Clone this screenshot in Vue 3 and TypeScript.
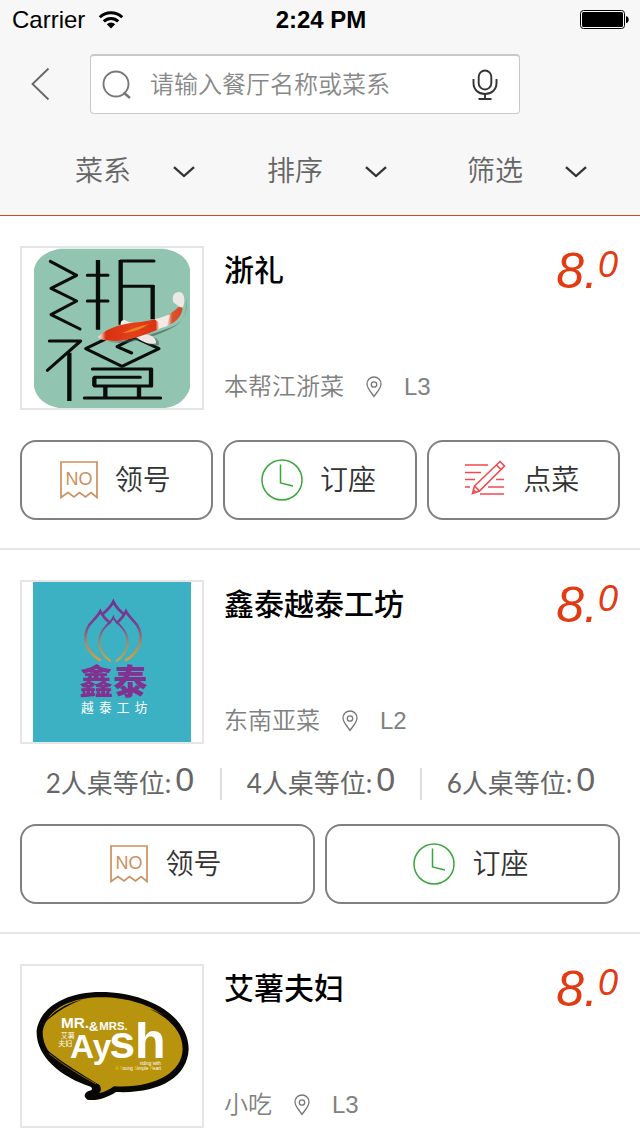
<script setup lang="ts">
import { ref } from 'vue'

type Action = 'number' | 'book' | 'order'

interface Restaurant {
  id: string
  name: string
  cuisine: string
  floor: string
  score: [string, string]
  queue: { size: number; waiting: number }[]
  actions: Action[]
}

const keyword = ref('')
const filters = ['菜系', '排序', '筛选']
const actionLabels: Record<Action, string> = { number: '领号', book: '订座', order: '点菜' }

const restaurants: Restaurant[] = [
  {
    id: 'zheli',
    name: '浙礼',
    cuisine: '本帮江浙菜',
    floor: 'L3',
    score: ['8.', '0'],
    queue: [],
    actions: ['number', 'book', 'order'],
  },
  {
    id: 'xintai',
    name: '鑫泰越泰工坊',
    cuisine: '东南亚菜',
    floor: 'L2',
    score: ['8.', '0'],
    queue: [
      { size: 2, waiting: 0 },
      { size: 4, waiting: 0 },
      { size: 6, waiting: 0 },
    ],
    actions: ['number', 'book'],
  },
  {
    id: 'aysh',
    name: '艾薯夫妇',
    cuisine: '小吃',
    floor: 'L3',
    score: ['8.', '0'],
    queue: [],
    actions: [],
  },
]
</script>

<template>
  <div class="page">
    <header class="header">
      <div class="status">
        <div class="carrier">
          <span>Carrier</span>
          <svg width="26" height="20" viewBox="0 0 26 20" aria-hidden="true">
            <g fill="none" stroke="#000" stroke-width="3">
              <path d="M1.8 7.2a16 16 0 0 1 22.4 0" />
              <path d="M5.8 11.4a10.2 10.2 0 0 1 14.4 0" />
            </g>
            <path d="M13 18.4l-4.2-4.2a6 6 0 0 1 8.4 0z" />
          </svg>
        </div>
        <div class="time">2:24 PM</div>
        <svg class="battery" width="50" height="20" viewBox="0 0 50 20" aria-hidden="true">
          <rect x="0.5" y="0.5" width="44" height="18" rx="3" fill="#fff" stroke="#000" />
          <rect x="2" y="2" width="41" height="15" rx="1.5" />
          <path d="M46 6.2c3.6 0 3.6 6.8 0 6.8z" />
        </svg>
      </div>

      <div class="nav">
        <button class="back" type="button" aria-label="返回">
          <svg width="20" height="34" viewBox="0 0 20 34" aria-hidden="true">
            <path d="M18.500 1.500L2.500 17l16 15.500" fill="none" stroke="#666" stroke-width="1.8" />
          </svg>
        </button>
        <div class="search">
          <svg width="30" height="30" viewBox="0 0 30 30" aria-hidden="true">
            <g fill="none" stroke="#777" stroke-width="1.9">
              <circle cx="14" cy="14" r="12.500" />
              <path d="M21.500 22.500l6.500 5.500" stroke-width="2.400" />
            </g>
          </svg>
          <input v-model="keyword" type="text" aria-label="搜索餐厅" placeholder="请输入餐厅名称或菜系" />
          <button class="mic" type="button" aria-label="语音搜索">
            <svg width="26" height="32" viewBox="0 0 26 32" aria-hidden="true">
              <g fill="none" stroke="#333" stroke-width="1.9">
                <rect x="6.700" y="1.500" width="12.600" height="19" rx="6.300" />
                <path d="M1.500 10v4c0 6.500 5 11 11.500 11s11.500-4.500 11.500-11v-4" />
                <path d="M13 25v5M6.500 30h13" />
              </g>
            </svg>
          </button>
        </div>
      </div>

      <div class="filters">
        <button v-for="label in filters" :key="label" class="filter" type="button">
          <span>{{ label }}</span>
          <svg width="22" height="12" viewBox="0 0 22 12" aria-hidden="true">
            <path d="M1 1.200L11 10l10-8.800" fill="none" stroke="#333" stroke-width="2.300" />
          </svg>
        </button>
      </div>
    </header>

    <main>
      <article v-for="r in restaurants" :key="r.id" class="card">
        <div class="summary">
          <div class="logo">
            <svg v-if="r.id === 'zheli'" viewBox="36 36 540 480" role="img" aria-label="浙礼">
              <defs>
                <linearGradient id="koi" gradientUnits="userSpaceOnUse" x1="264" y1="0" x2="526" y2="0">
                  <stop offset="0" stop-color="#f1e4de" />
                  <stop offset="0.040" stop-color="#e8b7a6" />
                  <stop offset="0.090" stop-color="#da2f12" />
                  <stop offset="0.400" stop-color="#e2401a" />
                  <stop offset="0.660" stop-color="#db3313" />
                  <stop offset="0.700" stop-color="#f6e9e2" />
                  <stop offset="0.790" stop-color="#f3e3dc" />
                  <stop offset="0.850" stop-color="#d9532f" />
                  <stop offset="1" stop-color="#d9411c" />
                </linearGradient>
              </defs>
              <path
                d="M150 38H462C510 46 534 70 540 100V455C532 485 506 510 466 516H146C104 508 78 484 72 452V100C78 70 104 46 150 38z"
                fill="#91c5b2"
              />
              <g fill="none" stroke="#0b0d0c" stroke-width="9" stroke-linecap="round" stroke-linejoin="round">
                <path d="M121 76L200 118L123 157L200 195L123 236L210 279" />
                <path d="M232 118H294M232 195H294M332 75H432M332 151H430M118 315H212L112 403" />
                <path d="M247 399H425M253 424H391M253 450H425M223 486H452" />
                <path d="M283 311L227 338L336 391L447 338L375 305L321 332L365 351" />
              </g>
              <g fill="none" stroke="#0b0d0c" stroke-width="13">
                <path d="M264 72V281M332 72V266M428 148V250M178 350V495" />
                <path d="M253 424V450M423 399V450M286 450V486M387 450V486" />
              </g>
              <path
                d="M292 316C350 322 440 290 478 276C522 262 538 220 528 184C536 230 516 266 474 282C404 314 336 328 292 316z"
                fill="#38594d"
                opacity="0.600"
              />
              <path d="M384 306C418 292 454 306 446 328C422 332 400 320 384 306z" fill="#38594d" opacity="0.500" />
              <path d="M372 300C410 286 440 300 438 322C416 328 396 316 372 300z" fill="#eee7e2" />
              <path d="M332 270Q330 250 344 252Q360 262 384 262z" fill="#f3eee9" />
              <path
                d="M264 302C300 270 346 262 392 258C440 252 482 240 508 211L518 213C516 248 490 260 471 271L452 277C400 300 340 322 292 313C276 313 264 306 264 302z"
                fill="url(#koi)"
              />
              <path d="M434 250C452 245 466 242 480 236L472 268L448 276Q454 264 434 250z" fill="#f4e9e3" />
              <path d="M336 292C360 280 388 270 416 264Q390 286 336 292z" fill="#f0a12b" opacity="0.700" />
              <path d="M509 213L490 199C482 172 504 162 517 172C526 186 524 202 518 215z" fill="#ece9e5" />
            </svg>

            <svg v-else-if="r.id === 'xintai'" viewBox="36 36 540 480" role="img" aria-label="鑫泰 越泰工坊">
              <defs>
                <linearGradient id="lotus" gradientUnits="userSpaceOnUse" x1="0" y1="90" x2="0" y2="275">
                  <stop offset="0" stop-color="#762c91" />
                  <stop offset="0.400" stop-color="#7b3f91" />
                  <stop offset="0.700" stop-color="#a58b68" />
                  <stop offset="1" stop-color="#d4a43e" />
                </linearGradient>
              </defs>
              <rect x="69" y="36" width="474" height="480" fill="#3cb1c4" />
              <g fill="none" stroke="url(#lotus)" stroke-width="8">
                <path d="M276 134C288 124 302 112 310 95C318 112 330 124 344 134" />
                <path d="M272 272C212 236 218 182 249 152C260 140 268 130 271 124C277 136 286 148 302 160" />
                <path d="M346 272C406 236 400 182 370 152C359 140 351 130 348 124C342 136 334 148 318 160" />
                <path d="M302 274C254 240 262 194 290 166C300 156 307 150 310 142C313 150 320 156 330 166C360 196 366 240 318 274" stroke-width="6" />
              </g>
              <text x="310" y="372" class="xintai-name">鑫泰</text>
              <text x="213" y="426" class="xintai-sub">越</text>
              <text x="267" y="426" class="xintai-sub">泰</text>
              <text x="320" y="426" class="xintai-sub">工</text>
              <text x="374" y="426" class="xintai-sub">坊</text>
            </svg>

            <svg v-else viewBox="36 30 540 480" role="img" aria-label="Mr. &amp; Mrs. Aysh 艾薯夫妇">
              <path
                d="M80 222C92 152 170 108 272 108C410 108 536 178 536 280C532 366 444 414 318 408C292 424 262 436 232 431C218 422 224 408 238 404C248 402 248 396 242 392C150 362 76 300 80 222z"
                fill="#080704"
              />
              <path
                d="M98 226C110 162 178 124 274 124C400 124 518 186 518 280C516 352 430 398 312 391C298 400 286 408 268 411Q276 402 270 389C180 362 96 300 98 226z"
                fill="#b8930d"
              />
              <path d="M98 268C126 300 196 344 270 388L262 396C176 366 116 318 98 268zM104 200Q142 148 218 130Q150 156 104 200zM418 158Q490 190 516 250L524 250Q500 186 418 158z" fill="#080704" />
              <path d="M116 292Q176 340 258 384" fill="none" stroke="#b8930d" stroke-width="2" />
              <text class="aysh-bold"
                ><tspan x="153" y="215" class="aysh-mr">MR.</tspan
                ><tspan x="236" y="226" class="aysh-amp">&amp;</tspan
                ><tspan x="268" y="221" class="aysh-mrs">MRS.</tspan
                ><tspan x="180" y="305" class="aysh-ay">Ay</tspan
                ><tspan x="298" y="305" class="aysh-s">s</tspan
                ><tspan x="374" y="305" class="aysh-h">h</tspan></text
              >
              <text class="aysh-cn"
                ><tspan x="152" y="245">艾薯</tspan><tspan x="145" y="270">夫妇</tspan></text
              >
              <text class="aysh-tag"
                ><tspan x="390" y="326">riding with</tspan
                ><tspan x="316" y="342" class="gold">A Y</tspan>oung <tspan class="gold">S</tspan>imple
                <tspan class="gold">H</tspan>eart</text
              >
            </svg>
          </div>

          <div class="info">
            <div class="heading">
              <h2>{{ r.name }}</h2>
              <div class="score">
                <span>{{ r.score[0] }}</span><span class="decimal">{{ r.score[1] }}</span>
              </div>
            </div>
            <div class="meta">
              <span>{{ r.cuisine }}</span>
              <svg width="16" height="22" viewBox="0 0 16 22" aria-hidden="true">
                <g fill="none" stroke="#777" stroke-width="1.300">
                  <path d="M8 20.500C5.500 16.500 1 12.500 1 8a7 7 0 0 1 14 0c0 4.500-4.500 8.500-7 12.500z" />
                  <circle cx="8" cy="8.500" r="2.700" />
                </g>
              </svg>
              <span>{{ r.floor }}</span>
            </div>
          </div>
        </div>

        <div v-if="r.queue.length" class="queue">
          <div v-for="q in r.queue" :key="q.size" class="queue-item">
            <span>{{ q.size }}人桌等位:</span><span class="waiting">{{ q.waiting }}</span>
          </div>
        </div>

        <div v-if="r.actions.length" class="actions" :class="{ spaced: !r.queue.length }">
          <button v-for="a in r.actions" :key="a" class="action" type="button">
            <svg v-if="a === 'number'" width="38" height="38" viewBox="0 0 38 38" aria-hidden="true">
              <path
                d="M1 36.500V1H37V36.500L31 31.500L25.500 36L19.500 31.500L14 36L8 31.500z"
                fill="none"
                stroke="#cc9060"
                stroke-width="1.700"
              />
              <text x="19" y="24" class="ticket-text">NO</text>
            </svg>
            <svg v-else-if="a === 'book'" width="42" height="42" viewBox="0 0 42 42" aria-hidden="true">
              <g fill="none" stroke="#39a63b" stroke-width="1.500">
                <circle cx="21" cy="21" r="20" />
                <path d="M19.500 5.500V24L32 27" />
              </g>
            </svg>
            <svg v-else width="42" height="40" viewBox="0 0 42 40" aria-hidden="true">
              <g fill="none" stroke="#f5484b" stroke-width="1.600">
                <path d="M1 5H24M1 12.500H17M1 19.500H11M1 27H6M32 19.500H40M24 27H40M16 34H40" />
                <path d="M10.500 26L36 1.500L40.500 6L15.500 31L8.500 33.500zM10.500 26L15.500 31M32.500 5L37 9.500M11.500 32L9.500 30" />
              </g>
            </svg>
            <span class="action-label">{{ actionLabels[a] }}</span>
          </button>
        </div>
      </article>
    </main>
  </div>
</template>

<style>
body {
  margin: 0;
  background: #fff;
}
</style>

<style scoped>
.page {
  min-height: 100vh;
  background: #fff;
  font-family: 'Liberation Sans', 'Noto Sans CJK SC', sans-serif;
  color: #333;
}

svg {
  display: block;
  flex: none;
}

button {
  margin: 0;
  padding: 0;
  border: 0;
  background: none;
  color: inherit;
  font: inherit;
  cursor: pointer;
}

.header {
  background: #f7f7f7;
  border-bottom: 1px solid #d0492c;
}

.status {
  display: grid;
  grid-template-columns: 1fr auto 1fr;
  align-items: center;
  height: 40px;
  padding: 0 10px 0 12px;
  color: #000;
  font-size: 24px;
}

.carrier {
  display: flex;
  align-items: center;
  gap: 13px;
}

.time {
  font-weight: 700;
}

.battery {
  justify-self: end;
}

.nav {
  display: flex;
  align-items: center;
  padding: 14px 120px 14px 30px;
}

.back {
  width: 60px;
}

.search {
  flex: 1;
  display: flex;
  align-items: center;
  min-width: 0;
  height: 60px;
  box-sizing: border-box;
  padding: 0 21px 0 11px;
  border: 1px solid #c8c8c8;
  border-top-width: 2px;
  border-radius: 4px;
  background: #fff;
}

.search input {
  flex: 1;
  min-width: 0;
  margin: 0;
  padding: 0 0 0 18px;
  border: 0;
  outline: 0;
  background: none;
  color: #333;
  font: inherit;
  font-size: 24px;
  font-weight: 350;
}

.search input::placeholder {
  color: #888;
  opacity: 1;
}

.filters {
  display: grid;
  grid-template-columns: 193fr 201fr 118fr;
  align-items: center;
  height: 87px;
  padding: 0 53px 0 75px;
}

.filter {
  display: flex;
  align-items: center;
  gap: 42px;
  color: #666;
  font-size: 28px;
  font-weight: 350;
  line-height: 42px;
  white-space: nowrap;
}

.card {
  padding: 30px 20px 28px;
  border-bottom: 2px solid #e5e5e5;
}

.card:last-child {
  padding-bottom: 0;
  border-bottom: 0;
}

.summary {
  display: flex;
  gap: 20px;
}

.logo {
  flex: none;
  width: 180px;
  height: 160px;
  border: 2px solid #e5e5e5;
}

.logo svg {
  width: 100%;
  height: 100%;
}

.info {
  flex: 1;
  display: flex;
  flex-direction: column;
  justify-content: space-between;
  min-width: 0;
}

.heading {
  display: flex;
  justify-content: space-between;
  line-height: 50px;
}

.heading h2 {
  margin: 0;
  color: #000;
  font-size: 30px;
  font-weight: 500;
}

.score {
  display: flex;
  padding-right: 2px;
  color: #e33a12;
  font-size: 50px;
  font-style: italic;
}

.decimal {
  font-size: 36px;
  line-height: 38px;
}

.meta {
  display: flex;
  align-items: center;
  gap: 22px;
  color: #808080;
  font-size: 24px;
  font-weight: 350;
  line-height: 46px;
}

.queue {
  display: grid;
  grid-template-columns: repeat(3, 1fr);
  padding: 24px 0;
}

.queue-item {
  display: flex;
  align-items: flex-start;
  justify-content: center;
  gap: 4px;
  height: 32px;
  color: #666;
  font-family: Lato, 'Noto Sans CJK SC', sans-serif;
  font-size: 26px;
  line-height: 30px;
  white-space: nowrap;
}

.queue-item + .queue-item {
  border-left: 2px solid #ddd;
}

.waiting {
  font-family: 'Liberation Sans', sans-serif;
  font-size: 34px;
  line-height: 22px;
}

.actions {
  display: flex;
  gap: 10px;
}

.actions.spaced {
  margin-top: 30px;
}

.action {
  flex: 1 1 0;
  display: flex;
  align-items: center;
  justify-content: center;
  gap: 17px;
  height: 80px;
  border: 2px solid #808080;
  border-radius: 16px;
  font-size: 28px;
  font-weight: 350;
  white-space: nowrap;
}

.action-label {
  padding: 0 3px 4px 0;
}

.ticket-text {
  fill: #cc9060;
  font-family: 'Liberation Sans', sans-serif;
  font-size: 18px;
  font-weight: 400;
  text-anchor: middle;
}

.xintai-name {
  fill: #81318f;
  font-size: 102px;
  font-weight: 900;
  text-anchor: middle;
}

.xintai-sub {
  fill: #fff;
  font-size: 38px;
}

.aysh-bold {
  fill: #fff;
  font-weight: 700;
}

.aysh-mr {
  font-size: 46px;
}

.aysh-amp {
  font-size: 40px;
}

.aysh-mrs {
  font-size: 34px;
}

.aysh-ay {
  font-size: 100px;
}

.aysh-s {
  font-size: 140px;
}

.aysh-h {
  font-size: 152px;
}

.aysh-cn {
  fill: #fff;
  font-size: 21px;
}

.aysh-tag {
  fill: #fff;
  font-size: 14px;
}

.gold {
  fill: #f1d000;
}
</style>
